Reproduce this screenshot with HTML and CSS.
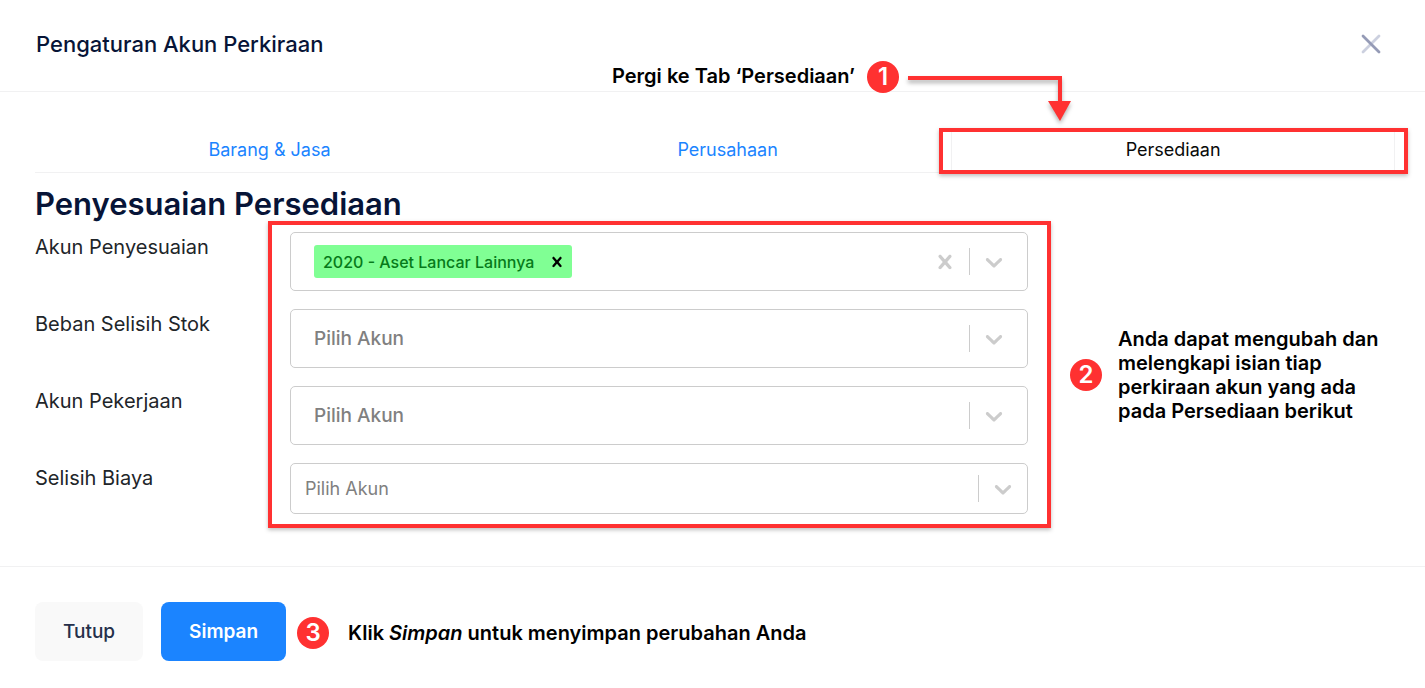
FILE: index.html
```html
<!DOCTYPE html>
<html lang="id">
<head>
    <meta charset="UTF-8">
    <meta name="viewport" content="width=device-width, initial-scale=1.0">
    <title>Pengaturan Akun Perkiraan</title>
    <link rel="stylesheet" href="styles.css">
</head>
<body>
    <!-- Shared icons -->
    <svg class="sprite" aria-hidden="true">
        <symbol id="chevron" viewBox="0 0 20 20">
            <path d="M4.516 7.548c0.436-0.446 1.043-0.481 1.576 0l3.908 3.747 3.908-3.747c0.533-0.481 1.141-0.446 1.574 0 0.436 0.445 0.408 1.197 0 1.615-0.406 0.418-4.695 4.502-4.695 4.502-0.217 0.223-0.502 0.335-0.787 0.335s-0.57-0.112-0.789-0.335c0 0-4.287-4.084-4.695-4.502s-0.436-1.17 0-1.615z"/>
        </symbol>
        <symbol id="cross" viewBox="0 0 20 20">
            <path d="M14.348 14.849c-0.469 0.469-1.229 0.469-1.697 0l-2.651-3.030-2.651 3.029c-0.469 0.469-1.229 0.469-1.697 0-0.469-0.469-0.469-1.229 0-1.697l2.758-3.15-2.759-3.152c-0.469-0.469-0.469-1.228 0-1.697s1.228-0.469 1.697 0l2.652 3.031 2.651-3.031c0.469-0.469 1.228-0.469 1.697 0s0.469 1.229 0 1.697l-2.758 3.152 2.758 3.15c0.469 0.469 0.469 1.229 0 1.698z"/>
        </symbol>
    </svg>

    <div class="modal">
        <header class="modal-header">
            <h1>Pengaturan Akun Perkiraan</h1>
            <button type="button" class="close" aria-label="Tutup dialog">
                <svg width="20" height="20" viewBox="0 0 20 20" fill="none" stroke-width="2.8" stroke-linecap="round">
                    <path d="M18 2L2 18" stroke="#ccd0df"/>
                    <path d="M2 2l16 16" stroke="#959bb6"/>
                </svg>
            </button>

            <div class="note note-tab">
                <p>Pergi ke Tab ‘Persediaan’</p>
                <span class="step">1</span>
                <svg class="arrow" width="168" height="56" viewBox="0 0 168 56">
                    <path d="M0 6h152v24" fill="none" stroke="#ff3131" stroke-width="4"/>
                    <path d="M140 29h23l-11 20z" fill="#ff3131"/>
                </svg>
            </div>
        </header>

        <div class="modal-body">
            <nav class="tabs">
                <a href="#barang" class="tab">Barang &amp; Jasa</a>
                <a href="#perusahaan" class="tab">Perusahaan</a>
                <a href="#persediaan" class="tab active">Persediaan</a>
            </nav>

            <h2>Penyesuaian Persediaan</h2>

            <div class="content">
                <form id="akunForm" class="fields">
                    <div class="field">
                        <label for="akunPenyesuaian">Akun Penyesuaian</label>
                        <div class="control multi">
                            <span class="tag">
                                2020 - Aset Lancar Lainnya
                                <button type="button" aria-label="Hapus akun">
                                    <svg width="20" height="20"><use href="#cross"/></svg>
                                </button>
                            </span>
                            <input type="text" id="akunPenyesuaian">
                            <div class="indicators">
                                <button type="button" aria-label="Kosongkan">
                                    <svg width="28" height="28"><use href="#cross"/></svg>
                                </button>
                                <span class="separator"></span>
                                <svg width="28" height="28"><use href="#chevron"/></svg>
                            </div>
                        </div>
                    </div>
                    <div class="field">
                        <label for="bebanSelisih">Beban Selisih Stok</label>
                        <div class="control">
                            <select id="bebanSelisih">
                                <option value="">Pilih Akun</option>
                            </select>
                            <div class="indicators">
                                <span class="separator"></span>
                                <svg width="28" height="28"><use href="#chevron"/></svg>
                            </div>
                        </div>
                    </div>
                    <div class="field">
                        <label for="akunPekerjaan">Akun Pekerjaan</label>
                        <div class="control">
                            <select id="akunPekerjaan">
                                <option value="">Pilih Akun</option>
                            </select>
                            <div class="indicators">
                                <span class="separator"></span>
                                <svg width="28" height="28"><use href="#chevron"/></svg>
                            </div>
                        </div>
                    </div>
                    <div class="field">
                        <label for="selisihBiaya">Selisih Biaya</label>
                        <div class="control small">
                            <select id="selisihBiaya">
                                <option value="">Pilih Akun</option>
                            </select>
                            <div class="indicators">
                                <span class="separator"></span>
                                <svg width="28" height="28"><use href="#chevron"/></svg>
                            </div>
                        </div>
                    </div>
                </form>

                <div class="note note-fields">
                    <span class="step">2</span>
                    <p>Anda dapat mengubah dan melengkapi isian tiap perkiraan akun yang ada pada Persediaan berikut</p>
                </div>
            </div>
        </div>

        <footer class="modal-footer">
            <button type="button" class="btn">Tutup</button>
            <button type="submit" form="akunForm" class="btn btn-primary">Simpan</button>
            <div class="note note-save">
                <span class="step">3</span>
                <p>Klik <em>Simpan</em> untuk menyimpan perubahan Anda</p>
            </div>
        </footer>
    </div>
</body>
</html>
```
FILE: styles.css
```css
* {
    margin: 0;
    padding: 0;
    box-sizing: border-box;
}

body {
    background: #fff;
    color: #212529;
    font-family: Inter, "Liberation Sans", sans-serif;
    font-size: 20px;
    line-height: 24px;
}

button, input, select {
    font: inherit;
    color: inherit;
    background: none;
    border: none;
}

button {
    cursor: pointer;
}

svg {
    display: block;
    fill: currentColor;
}

.sprite {
    position: absolute;
    width: 0;
    height: 0;
}

/* Header */
.modal-header {
    position: relative;
    display: flex;
    justify-content: space-between;
    align-items: center;
    height: 92px;
    padding: 0 44px 3px 36px;
    border-bottom: 1px solid #f1f1f2;
}

h1 {
    color: #071437;
    font-size: 22px;
    font-weight: 500;
}

/* Body */
.modal-body {
    padding: 36px 30px 52px 35px;
}

.tabs {
    display: flex;
    height: 45px;
    border-bottom: 1px solid #f1f1f2;
}

.tab {
    position: relative;
    flex: 1 1 auto;
    padding-top: 10px;
    color: #1b84ff;
    font-size: 18px;
    text-align: center;
    text-decoration: none;
}

.tab.active {
    color: #0a0a0a;
    border: 1px solid #f1f1f2;
    border-width: 0 1px;
}

h2 {
    margin: 11px 0 9px;
    color: #071437;
    font-size: 31px;
    font-weight: 600;
    line-height: 39px;
}

.content {
    display: grid;
    grid-template-columns: 1fr 325px;
    gap: 42px;
}

.fields {
    position: relative;
    display: flex;
    flex-direction: column;
    gap: 18px;
}

.field {
    display: grid;
    grid-template-columns: 255px 1fr;
}

.field label {
    padding-top: 3px;
}

.control {
    position: relative;
    height: 59px;
    border: 1px solid #ccc;
    border-radius: 5px;
}

.control select {
    width: 100%;
    height: 100%;
    padding: 0 90px 0 23px;
    color: #808080;
    font-size: 19px;
    font-weight: 500;
    appearance: none;
}

.control.small {
    height: 51px;
}

.control.small select {
    padding-left: 14px;
    font-size: 18px;
    font-weight: 400;
}

.multi {
    display: flex;
    align-items: center;
    padding: 0 110px 0 23px;
}

.multi input {
    flex: 1;
    min-width: 0;
    outline: none;
}

.tag {
    display: flex;
    align-items: center;
    gap: 13px;
    height: 33px;
    padding: 0 5px 0 9px;
    background: #80ff94;
    border-radius: 3px;
    color: #067a1a;
    font-size: 16px;
    font-weight: 500;
    white-space: nowrap;
}

.tag button {
    color: #000;
}

.indicators {
    position: absolute;
    top: 0;
    right: 19px;
    bottom: 0;
    display: flex;
    align-items: center;
    gap: 10px;
    color: #ccc;
    pointer-events: none;
}

.indicators button {
    pointer-events: auto;
}

.small .indicators {
    right: 10px;
}

.separator {
    width: 1px;
    height: 27px;
    background: #ccc;
}

/* Footer */
.modal-footer {
    display: flex;
    align-items: center;
    padding: 35px;
    border-top: 1px solid #f1f1f2;
}

.btn {
    height: 59px;
    margin-right: 18px;
    padding: 0 28px;
    background: #f9f9f9;
    border-radius: 8px;
    color: #252f4a;
    font-size: 19px;
    font-weight: 500;
}

.btn-primary {
    margin-right: 11px;
    background: #1b84ff;
    color: #fff;
    font-weight: 600;
}

/* Guide notes */
.note {
    display: flex;
    align-items: center;
    color: #000;
    font-weight: 600;
}

.step {
    flex: none;
    width: 32px;
    height: 32px;
    background: #ff3131;
    border-radius: 50%;
    color: #fff;
    font-size: 24px;
    line-height: 32px;
    text-align: center;
}

.note-tab {
    position: absolute;
    top: 61px;
    right: 349px;
    align-items: flex-start;
}

.note-tab p {
    margin: 3px 12px 0 0;
}

.arrow {
    margin: 11px 0 0 9px;
    filter: drop-shadow(0 3px 2px rgba(0, 0, 0, 0.3));
}

.note-fields {
    gap: 16px;
    padding-top: 3px;
}

.note-save {
    gap: 19px;
    padding-top: 3px;
}

/* Highlight frames drawn over the page */
.tab.active::after,
.fields::after {
    content: "";
    position: absolute;
    border: 4px solid #ff3131;
    box-shadow: 0 2px 4px rgba(0, 0, 0, 0.25);
    pointer-events: none;
}

.tab.active::after {
    inset: 0 -14px -2px -13px;
}

.fields::after {
    inset: -11px -23px -14px 233px;
}
```
